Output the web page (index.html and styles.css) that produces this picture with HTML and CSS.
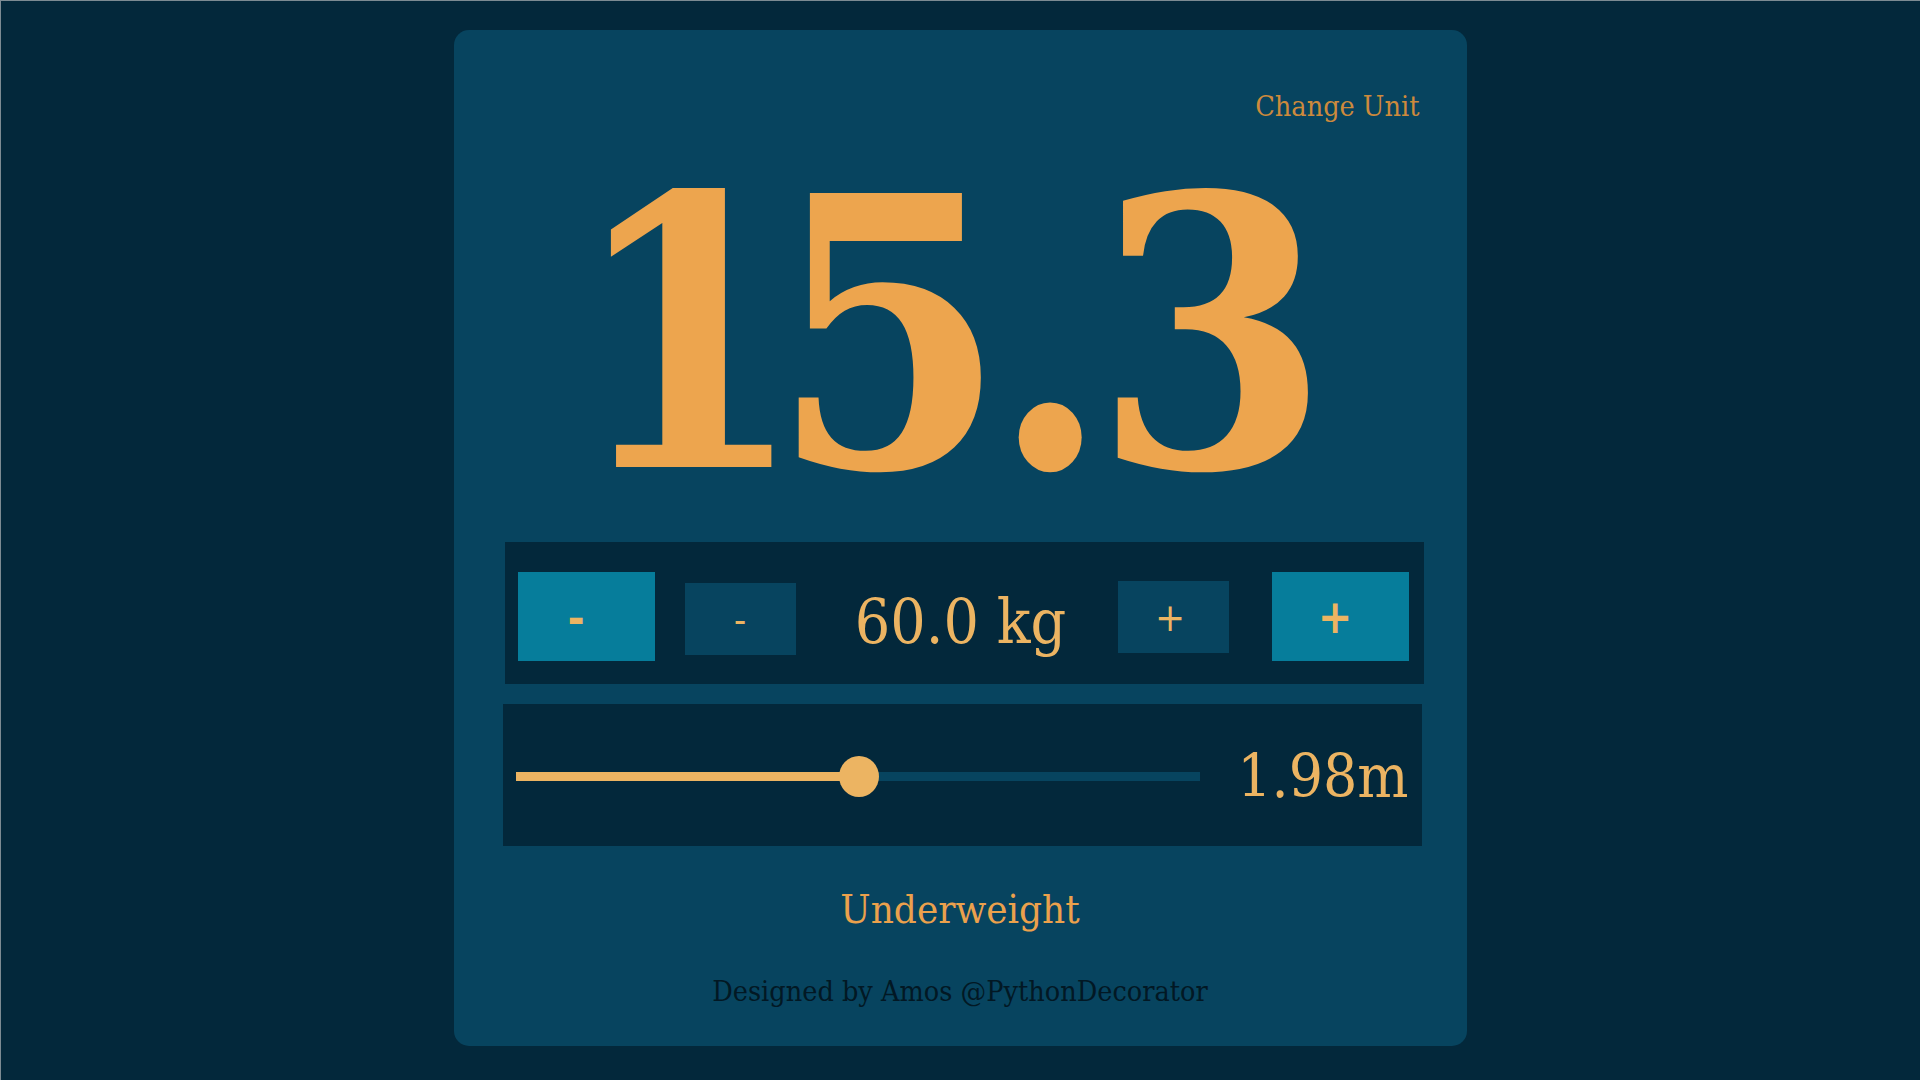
FILE: index.html
```html
<!DOCTYPE html>
<html lang="en">
<head>
<meta charset="utf-8">
<title>BMI Calculator</title>
<link rel="stylesheet" href="styles.css">
</head>
<body>
<div class="page">
  <main class="card">
    <div class="header"><a class="unit-link" href="#">Change Unit</a></div>
    <div class="bmi"><span class="bmi-one">1</span>5.3</div>
    <section class="weight">
      <button class="btn btn-big btn-minus-big">-</button>
      <button class="btn btn-small btn-minus-small">-</button>
      <div class="weight-value">60.0 kg</div>
      <button class="btn btn-small btn-plus-small">+</button>
      <button class="btn btn-big btn-plus-big">+</button>
    </section>
    <section class="height">
      <div class="slider">
        <div class="track">
          <div class="fill" style="width: 343px"></div>
          <div class="thumb" style="left: 323px"></div>
        </div>
      </div>
      <div class="height-value">1.98m</div>
    </section>
    <div class="status">Underweight</div>
    <div class="credit">Designed by Amos @PythonDecorator</div>
  </main>
</div>
</body>
</html>
```

FILE: styles.css
```css
html, body {
  margin: 0;
  padding: 0;
}
body {
  background: #03283b;
  font-family: "DejaVu Serif Condensed", "DejaVu Serif", serif;
  width: 1920px;
  height: 1080px;
  overflow: hidden;
}
.page {
  height: 1080px;
  box-sizing: border-box;
  border-top: 1px solid #7d8b93;
  border-left: 1px solid #7d8b93;
  display: flex;
  justify-content: center;
  align-items: flex-start;
  padding-top: 29px;
}
.card {
  width: 1013px;
  box-sizing: border-box;
  background: #07445f;
  border-radius: 15px;
  padding: 62px 47px 37px 0;
  display: flex;
  flex-direction: column;
  align-items: flex-start;
  margin-left: -1px;
}
.header {
  align-self: stretch;
  display: flex;
  justify-content: flex-end;
  height: 30px;
}
.unit-link {
  color: #cd8a3c;
  text-decoration: none;
  font-size: 28.5px;
  line-height: 30px;
}
.bmi {
  align-self: stretch;
  text-align: center;
  color: #eda54e;
  font-weight: bold;
  font-size: 376px;
  line-height: 300px;
  height: 300px;
  margin-top: 63px;
  padding-left: 11px;
  letter-spacing: -15px;
  white-space: nowrap;
}
.bmi-one {
  margin-right: -19px;
}
.weight {
  margin-top: 57px;
  margin-left: 51px;
  width: 919px;
  height: 142px;
  box-sizing: border-box;
  background: #03283b;
  display: flex;
  align-items: center;
  padding: 7px 15px 0 13px;
}
.btn {
  border: none;
  padding: 0;
  margin: 0;
  color: #ecb462;
  font-family: "DejaVu Serif Condensed", "DejaVu Serif", serif;
  display: flex;
  align-items: center;
  justify-content: center;
  cursor: pointer;
}
.btn-big {
  width: 137px;
  height: 89px;
  background: #067d9b;
  font-weight: bold;
  font-size: 46px;
}
.btn-small {
  width: 111px;
  height: 72px;
  background: #07445f;
  font-size: 40px;
}
.btn-minus-big { padding-right: 20px; }
.btn-plus-big { padding-right: 10px; margin-left: 43px; }
.btn-minus-small { margin-left: 30px; margin-top: 5px; }
.btn-plus-small { margin-top: 0; padding-right: 6px; }
.weight-value {
  flex: 1;
  text-align: center;
  color: #ecb462;
  font-size: 62px;
  line-height: 72px;
  padding-left: 8px;
  margin-top: 10px;
}
.height {
  margin-top: 20px;
  margin-left: 49px;
  width: 919px;
  height: 142px;
  box-sizing: border-box;
  background: #03283b;
  display: flex;
  align-items: center;
  padding: 2px 13px 0 13px;
}
.slider {
  width: 684px;
}
.track {
  position: relative;
  height: 9px;
  background: #07445f;
}
.fill {
  height: 9px;
  background: #ecb462;
}
.thumb {
  position: absolute;
  top: -16px;
  width: 40px;
  height: 41px;
  border-radius: 50%;
  background: #ecb462;
}
.height-value {
  flex: 1;
  text-align: right;
  color: #ecb462;
  font-size: 60px;
  line-height: 72px;
}
.status {
  align-self: stretch;
  text-align: center;
  color: #eba14c;
  font-size: 40px;
  line-height: 48px;
  margin-top: 39px;
  padding-left: 47px;
}
.credit {
  align-self: stretch;
  text-align: center;
  color: #021824;
  font-size: 28.5px;
  line-height: 34px;
  margin-top: 42px;
  padding-left: 47px;
}
```
